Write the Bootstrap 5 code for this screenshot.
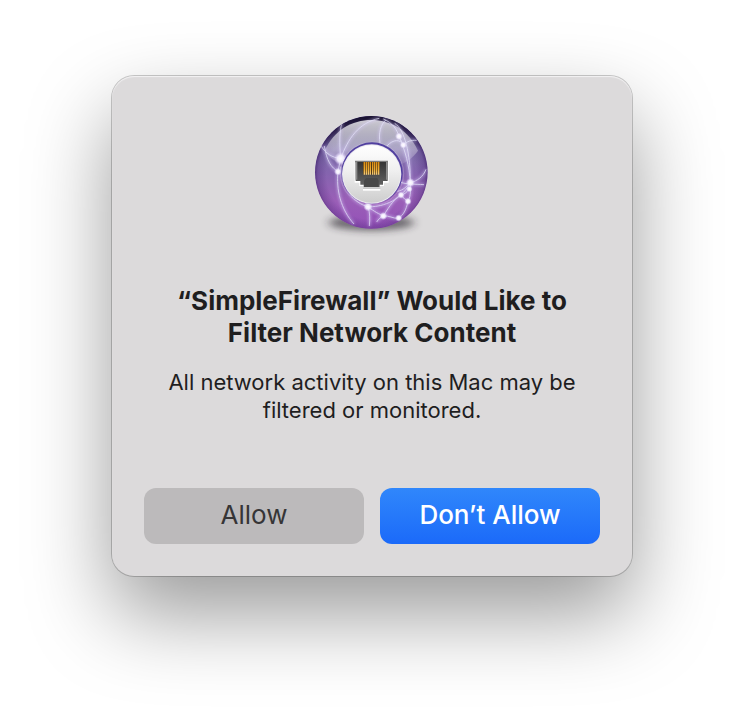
<!DOCTYPE html>
<html lang="en">
<head>
<meta charset="utf-8">
<meta name="viewport" content="width=device-width, initial-scale=1">
<title>Filter Network Content</title>
<link href="https://cdn.jsdelivr.net/npm/bootstrap@5.3.0/dist/css/bootstrap.min.css" rel="stylesheet">
<style>
  body { font-family: Inter, "Liberation Sans", sans-serif; background: #fff; color: #1f1e1f; }
  .stage { padding-top: 76px; padding-bottom: 148px; }
  .alert-panel {
    max-width: 520px;
    padding: 32px;
    border-radius: 22px;
    background: #dcdadb;
    box-shadow: inset 0 1px 1px #f3f2f3, 0 0 0 1px rgba(0,0,0,.2), 0 38px 84px rgba(0,0,0,.4);
  }
  .alert-title { font-size: 26px; line-height: 32px; font-weight: 700; margin: 43px 0 19px; }
  .alert-text { font-size: 22px; line-height: 28px; margin-bottom: 64px; }
  .alert-btn { height: 56px; border: 0; border-radius: 12px; font-size: 26px; line-height: 32px; padding: 11px 8px 13px; }
  .btn-allow, .btn-allow:hover { background: #bcbabb; color: #363536; }
  .btn-deny, .btn-deny:hover { background: linear-gradient(#3087fb, #1b6af9); color: #fff; font-weight: 500; }
</style>
<script src="https://cdn.jsdelivr.net/npm/bootstrap@5.3.0/dist/js/bootstrap.bundle.min.js"></script>
</head>
<body>
<main class="stage d-flex justify-content-center px-3">
  <section class="alert-panel w-100 text-center" role="alertdialog" aria-labelledby="dlg-title" aria-describedby="dlg-text">
    <svg class="d-block mx-auto" width="128" height="134" viewBox="6 6 384 402" aria-hidden="true">
      <defs>
        <linearGradient id="ball" x1="0" y1="0" x2="0" y2="1">
          <stop offset="0" stop-color="#656191"/><stop offset=".25" stop-color="#7c73a8"/>
          <stop offset=".5" stop-color="#8464ae"/><stop offset=".75" stop-color="#9a5fb7"/><stop offset="1" stop-color="#9450b8"/>
        </linearGradient>
        <radialGradient id="rim" cx=".5" cy=".52" r=".51">
          <stop offset=".78" stop-color="#40206c" stop-opacity="0"/><stop offset=".93" stop-color="#40206c" stop-opacity=".3"/><stop offset="1" stop-color="#351460" stop-opacity=".7"/>
        </radialGradient>
        <linearGradient id="cap" x1="0" y1="0" x2="0" y2="1">
          <stop offset="0" stop-color="#17112e"/><stop offset=".3" stop-color="#17112e" stop-opacity="0"/>
        </linearGradient>
        <linearGradient id="gloss" x1="0" y1="0" x2="0" y2="1">
          <stop offset="0" stop-color="#fff" stop-opacity=".78"/><stop offset=".55" stop-color="#fff" stop-opacity=".4"/><stop offset="1" stop-color="#fff" stop-opacity="0"/>
        </linearGradient>
        <linearGradient id="hub" x1="0" y1="0" x2="0" y2="1">
          <stop offset="0" stop-color="#fff"/><stop offset=".45" stop-color="#efefef"/><stop offset="1" stop-color="#cdcdcd"/>
        </linearGradient>
        <linearGradient id="jack" x1="0" y1="0" x2="0" y2="1">
          <stop offset="0" stop-color="#343434"/><stop offset="1" stop-color="#666"/>
        </linearGradient>
        <linearGradient id="pin" x1="0" y1="0" x2="0" y2="1">
          <stop offset="0" stop-color="#d98b10"/><stop offset=".6" stop-color="#edac32"/><stop offset="1" stop-color="#f5cf82"/>
        </linearGradient>
        <radialGradient id="node">
          <stop offset="0" stop-color="#fff"/><stop offset=".5" stop-color="#f4efff" stop-opacity=".95"/><stop offset="1" stop-color="#ddd0f8" stop-opacity="0"/>
        </radialGradient>
        <filter id="soft" x="-30%" y="-100%" width="160%" height="300%"><feGaussianBlur stdDeviation="15 11"/></filter>
        <filter id="glow" x="-20%" y="-20%" width="140%" height="140%"><feGaussianBlur stdDeviation="4"/></filter>
        <clipPath id="disc"><circle cx="196" cy="199" r="169"/></clipPath>
        <g id="web">
          <path d="M108 50C100 76 100 112 104 158"/>
          <path d="M220 37C158 50 126 98 104 158"/>
          <path d="M44 118C60 144 78 154 104 158"/>
          <path d="M55 120C62 164 76 186 96 196"/>
          <path d="M104 158L96 196"/>
          <path d="M96 196C90 250 104 310 144 354"/>
          <path d="M104 182C110 250 144 292 186 302"/>
          <path d="M222 112C217 82 224 54 240 42"/>
          <path d="M232 39C262 52 272 70 279 91C284 102 288 108 292 117"/>
          <path d="M266 52C296 70 314 145 313 230"/>
          <path d="M292 117C302 106 316 102 332 103"/>
          <path d="M243 120C262 98 284 100 292 117"/>
          <path d="M279 91C298 134 310 180 313 230"/>
          <path d="M360 190C352 212 334 225 313 230"/>
          <path d="M354 236C326 234 300 236 274 226"/>
          <path d="M313 230C315 260 312 276 306 286"/>
          <path d="M274 256C294 252 300 242 313 230"/>
          <path d="M285 267C292 278 300 280 306 286"/>
          <path d="M310 248C302 260 294 266 285 267C270 272 250 300 232 330"/>
          <path d="M306 286C300 314 292 326 278 337"/>
          <path d="M186 302C220 304 282 290 313 230"/>
          <path d="M186 302C192 320 192 340 190 360"/>
          <path d="M186 302C206 318 220 324 232 330"/>
          <path d="M212 348C218 338 224 334 232 330C250 328 260 338 278 337"/>
        </g>
      </defs>
      <ellipse cx="196" cy="350" rx="128" ry="24" fill="#252229" opacity=".6" filter="url(#soft)"/>
      <circle cx="196" cy="199" r="169" fill="url(#ball)"/>
      <g clip-path="url(#disc)">
        <circle cx="196" cy="199" r="169" fill="url(#rim)"/>
        <circle cx="196" cy="199" r="169" fill="url(#cap)"/>
        <path d="M56 134C84 72 138 42 196 42S308 72 336 134C308 176 250 192 196 192S84 176 56 134Z" fill="url(#gloss)"/>
        <use href="#web" fill="none" stroke="#d8cafa" stroke-width="8" opacity=".5" filter="url(#glow)"/>
        <use href="#web" fill="none" stroke="#e6e6fa" stroke-width="3" opacity=".7"/>
        <g fill="url(#node)">
          <circle cx="104" cy="158" r="20"/><circle cx="96" cy="197" r="12"/>
          <circle cx="279" cy="91" r="12"/><circle cx="292" cy="117" r="11"/>
          <circle cx="313" cy="230" r="14"/><circle cx="310" cy="249" r="10"/>
          <circle cx="285" cy="267" r="11"/><circle cx="306" cy="286" r="11"/>
          <circle cx="186" cy="302" r="14"/><circle cx="232" cy="330" r="12"/><circle cx="278" cy="336" r="11"/>
        </g>
      </g>
      <circle cx="198" cy="203" r="95" fill="none" stroke="#ded2ee" stroke-width="2" opacity=".4"/>
      <circle cx="198" cy="201" r="92" fill="#5140a0"/>
      <circle cx="197" cy="204" r="89" fill="#ece9f0"/>
      <circle cx="197" cy="204" r="86" fill="url(#hub)"/>
      <path d="M146 165H248V230H234V240H221V246H173V240H160V230H146Z" fill="#fff"/>
      <path d="M147 164H246V169H147Z" fill="#7c7c7c"/>
      <path d="M149 168H245V225H231V236H221V244H173V236H163V225H149Z" fill="url(#jack)"/>
      <path d="M149 168H154V221H149ZM240 168H245V221H240Z" fill="#8b8b8b"/>
      <path d="M180 216H214L218 224V243H174V224Z" fill="#484848"/>
      <path d="M171 244H223V249H171Z" fill="#c9c9c9"/>
      <path d="M171 249H223V254H171Z" fill="#fff"/>
      <path d="M171 168H221V205H171Z" fill="#503817"/>
      <path fill="url(#pin)" d="M173 168H177V206H173ZM179 168H183V206H179ZM185 168H189V206H185ZM191 168H195V206H191ZM198 168H202V206H198ZM204 168H208V206H204ZM210 168H214V206H210ZM216 168H220V206H216Z"/>
    </svg>
    <h1 class="alert-title" id="dlg-title">“SimpleFirewall” Would Like to Filter Network Content</h1>
    <p class="alert-text" id="dlg-text">All network activity on this Mac may be filtered or monitored.</p>
    <div class="row row-cols-2 gx-3">
      <div class="col"><button type="button" class="btn alert-btn btn-allow w-100">Allow</button></div>
      <div class="col"><button type="button" class="btn alert-btn btn-deny w-100">Don’t Allow</button></div>
    </div>
  </section>
</main>
</body>
</html>
